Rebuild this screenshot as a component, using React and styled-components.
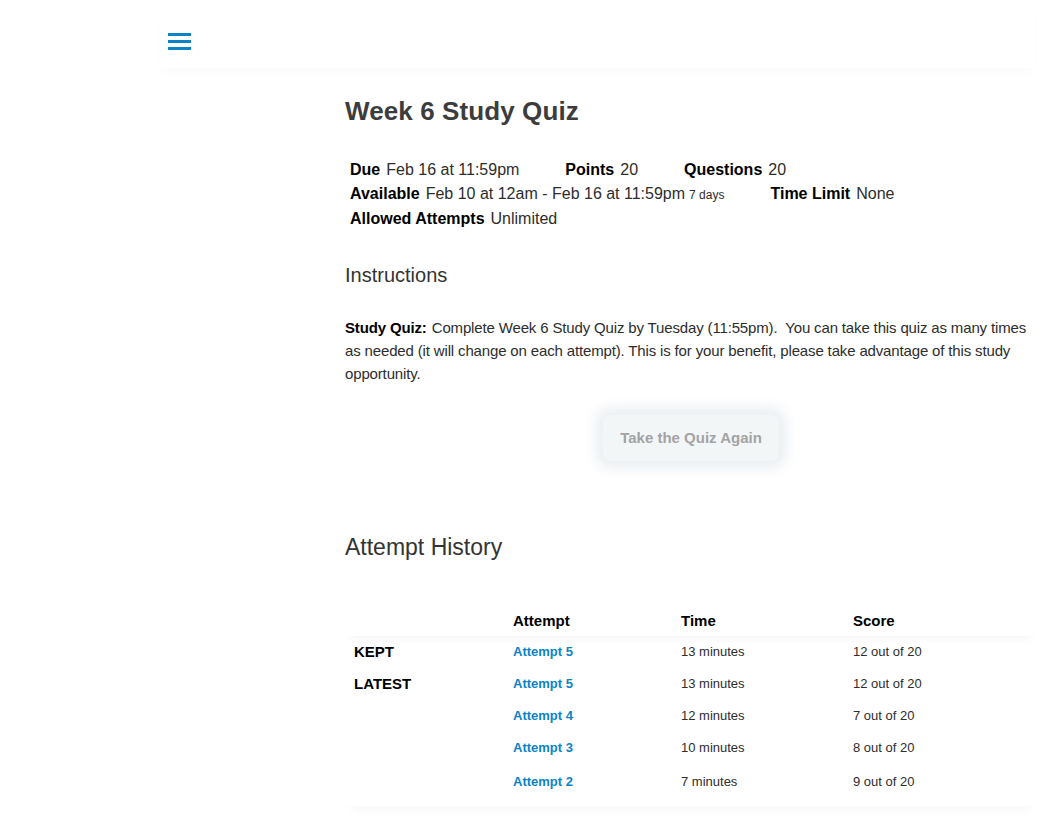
import React from 'react'
import styled, { createGlobalStyle } from 'styled-components'

const GlobalStyle = createGlobalStyle`
  html, body {
    margin: 0;
    padding: 0;
    background: #fff;
    font-family: "Liberation Sans", Arial, sans-serif;
    color: #2d2d2d;
  }
`

const details = [
  { label: 'Due', value: 'Feb 16 at 11:59pm' },
  { label: 'Points', value: '20' },
  { label: 'Questions', value: '20' },
  { label: 'Available', value: 'Feb 10 at 12am - Feb 16 at 11:59pm', note: '7 days' },
  { label: 'Time Limit', value: 'None' },
  { label: 'Allowed Attempts', value: 'Unlimited' },
]

const attempts = [
  { tag: 'KEPT', name: 'Attempt 5', time: '13 minutes', score: '12 out of 20' },
  { tag: 'LATEST', name: 'Attempt 5', time: '13 minutes', score: '12 out of 20' },
  { tag: '', name: 'Attempt 4', time: '12 minutes', score: '7 out of 20' },
  { tag: '', name: 'Attempt 3', time: '10 minutes', score: '8 out of 20' },
  { tag: '', name: 'Attempt 2', time: '7 minutes', score: '9 out of 20', tall: true },
]

const App = () => {
  return (
    <Page>
      <GlobalStyle />
      <Header>
        <Burger aria-label="menu">
          <span />
          <span />
          <span />
        </Burger>
      </Header>

      <Content>
        <Title>Week 6 Study Quiz</Title>

        <Details>
          {details.map((d) => (
            <DetailItem key={d.label}>
              <DetailLabel>{d.label}</DetailLabel>
              {d.value}
              {d.note && <Note>{d.note}</Note>}
            </DetailItem>
          ))}
        </Details>

        <SubHeading>Instructions</SubHeading>

        <Paragraph>
          <strong>Study Quiz:</strong> Complete Week 6 Study Quiz by Tuesday (11:55pm).&nbsp; You can take this
          quiz as many times as needed (it will change on each attempt). This is for your benefit, please take
          advantage of this study opportunity.
        </Paragraph>

        <ButtonRow>
          <QuizButton>Take the Quiz Again</QuizButton>
        </ButtonRow>

        <HistoryHeading>Attempt History</HistoryHeading>

        <Table>
          <HeadRow>
            <Cell />
            <HeadCell>Attempt</HeadCell>
            <HeadCell>Time</HeadCell>
            <HeadCell>Score</HeadCell>
          </HeadRow>
          {attempts.map((a, i) => (
            <Row key={i} $tall={a.tall}>
              <TagCell>{a.tag}</TagCell>
              <LinkCell href="#">{a.name}</LinkCell>
              <Cell>{a.time}</Cell>
              <Cell>{a.score}</Cell>
            </Row>
          ))}
        </Table>
      </Content>
    </Page>
  )
}

export default App

const Page = styled.div`
  width: 1062px;
  min-height: 822px;
  background: #fff;
`

const Header = styled.div`
  height: 68px;
  margin: 0 27px 0 160px;
  padding: 33px 0 0 8px;
  box-sizing: border-box;
  box-shadow: 0 8px 12px -4px rgba(0, 0, 0, 0.025);
`

const Burger = styled.div`
  width: 23px;
  display: flex;
  flex-direction: column;
  gap: 4px;

  span {
    display: block;
    height: 3px;
    background: #0a84c6;
  }
`

const Content = styled.div`
  margin-left: 345px;
  width: 692px;
  padding-top: 26px;
`

const Title = styled.h1`
  margin: 0;
  font-size: 26px;
  line-height: 34px;
  font-weight: 700;
  color: #3c3c3c;
  letter-spacing: 0.1px;
`

const Details = styled.div`
  display: flex;
  flex-wrap: wrap;
  column-gap: 46px;
  padding: 30px 0 0 5px;
  width: 670px;
`

const DetailItem = styled.div`
  font-size: 16px;
  line-height: 23.5px;
  color: #2d2d2d;
  white-space: nowrap;
`

const DetailLabel = styled.span`
  font-weight: 700;
  color: #000;
  margin-right: 6px;
`

const Note = styled.span`
  font-size: 12px;
  margin-left: 4px;
`

const SubHeading = styled.h2`
  margin: 31px 0 0;
  font-size: 20px;
  line-height: 26px;
  font-weight: 400;
  color: #333;
`

const Paragraph = styled.p`
  margin: 28px 0 0;
  font-size: 15px;
  line-height: 23px;
  letter-spacing: -0.15px;
  color: #2d2d2d;

  strong {
    color: #000;
    margin-right: 1px;
  }
`

const ButtonRow = styled.div`
  display: flex;
  justify-content: center;
  padding-top: 30px;
`

const QuizButton = styled.button`
  border: 0;
  width: 176px;
  height: 46px;
  border-radius: 8px;
  background: #f3f6f7;
  box-shadow: 0 0 12px 8px rgba(228, 234, 238, 0.7);
  font-family: "Liberation Sans", Arial, sans-serif;
  font-size: 15px;
  font-weight: 700;
  color: #a3a3a3;
`

const HistoryHeading = styled.h2`
  margin: 71px 0 0;
  font-size: 23px;
  line-height: 30px;
  font-weight: 400;
  color: #333;
`

const Table = styled.div`
  margin-top: 44px;
  box-shadow: 0 10px 10px -6px rgba(0, 0, 0, 0.03);
  padding-bottom: 6px;
`

const Row = styled.div`
  display: grid;
  grid-template-columns: 168px 168px 172px 1fr;
  align-items: center;
  height: ${(p) => (p.$tall ? '36px' : '32px')};
`

const HeadRow = styled(Row)`
  height: 30px;
  box-shadow: 0 8px 8px -6px rgba(0, 0, 0, 0.05);
`

const Cell = styled.div`
  font-size: 13px;
  color: #2d2d2d;
`

const HeadCell = styled.div`
  font-size: 15px;
  font-weight: 700;
  color: #000;
`

const TagCell = styled.div`
  padding-left: 9px;
  font-size: 15px;
  font-weight: 700;
  color: #000;
`

const LinkCell = styled.a`
  font-size: 13px;
  font-weight: 700;
  color: #0a84c6;
  text-decoration: none;
  justify-self: start;
`
